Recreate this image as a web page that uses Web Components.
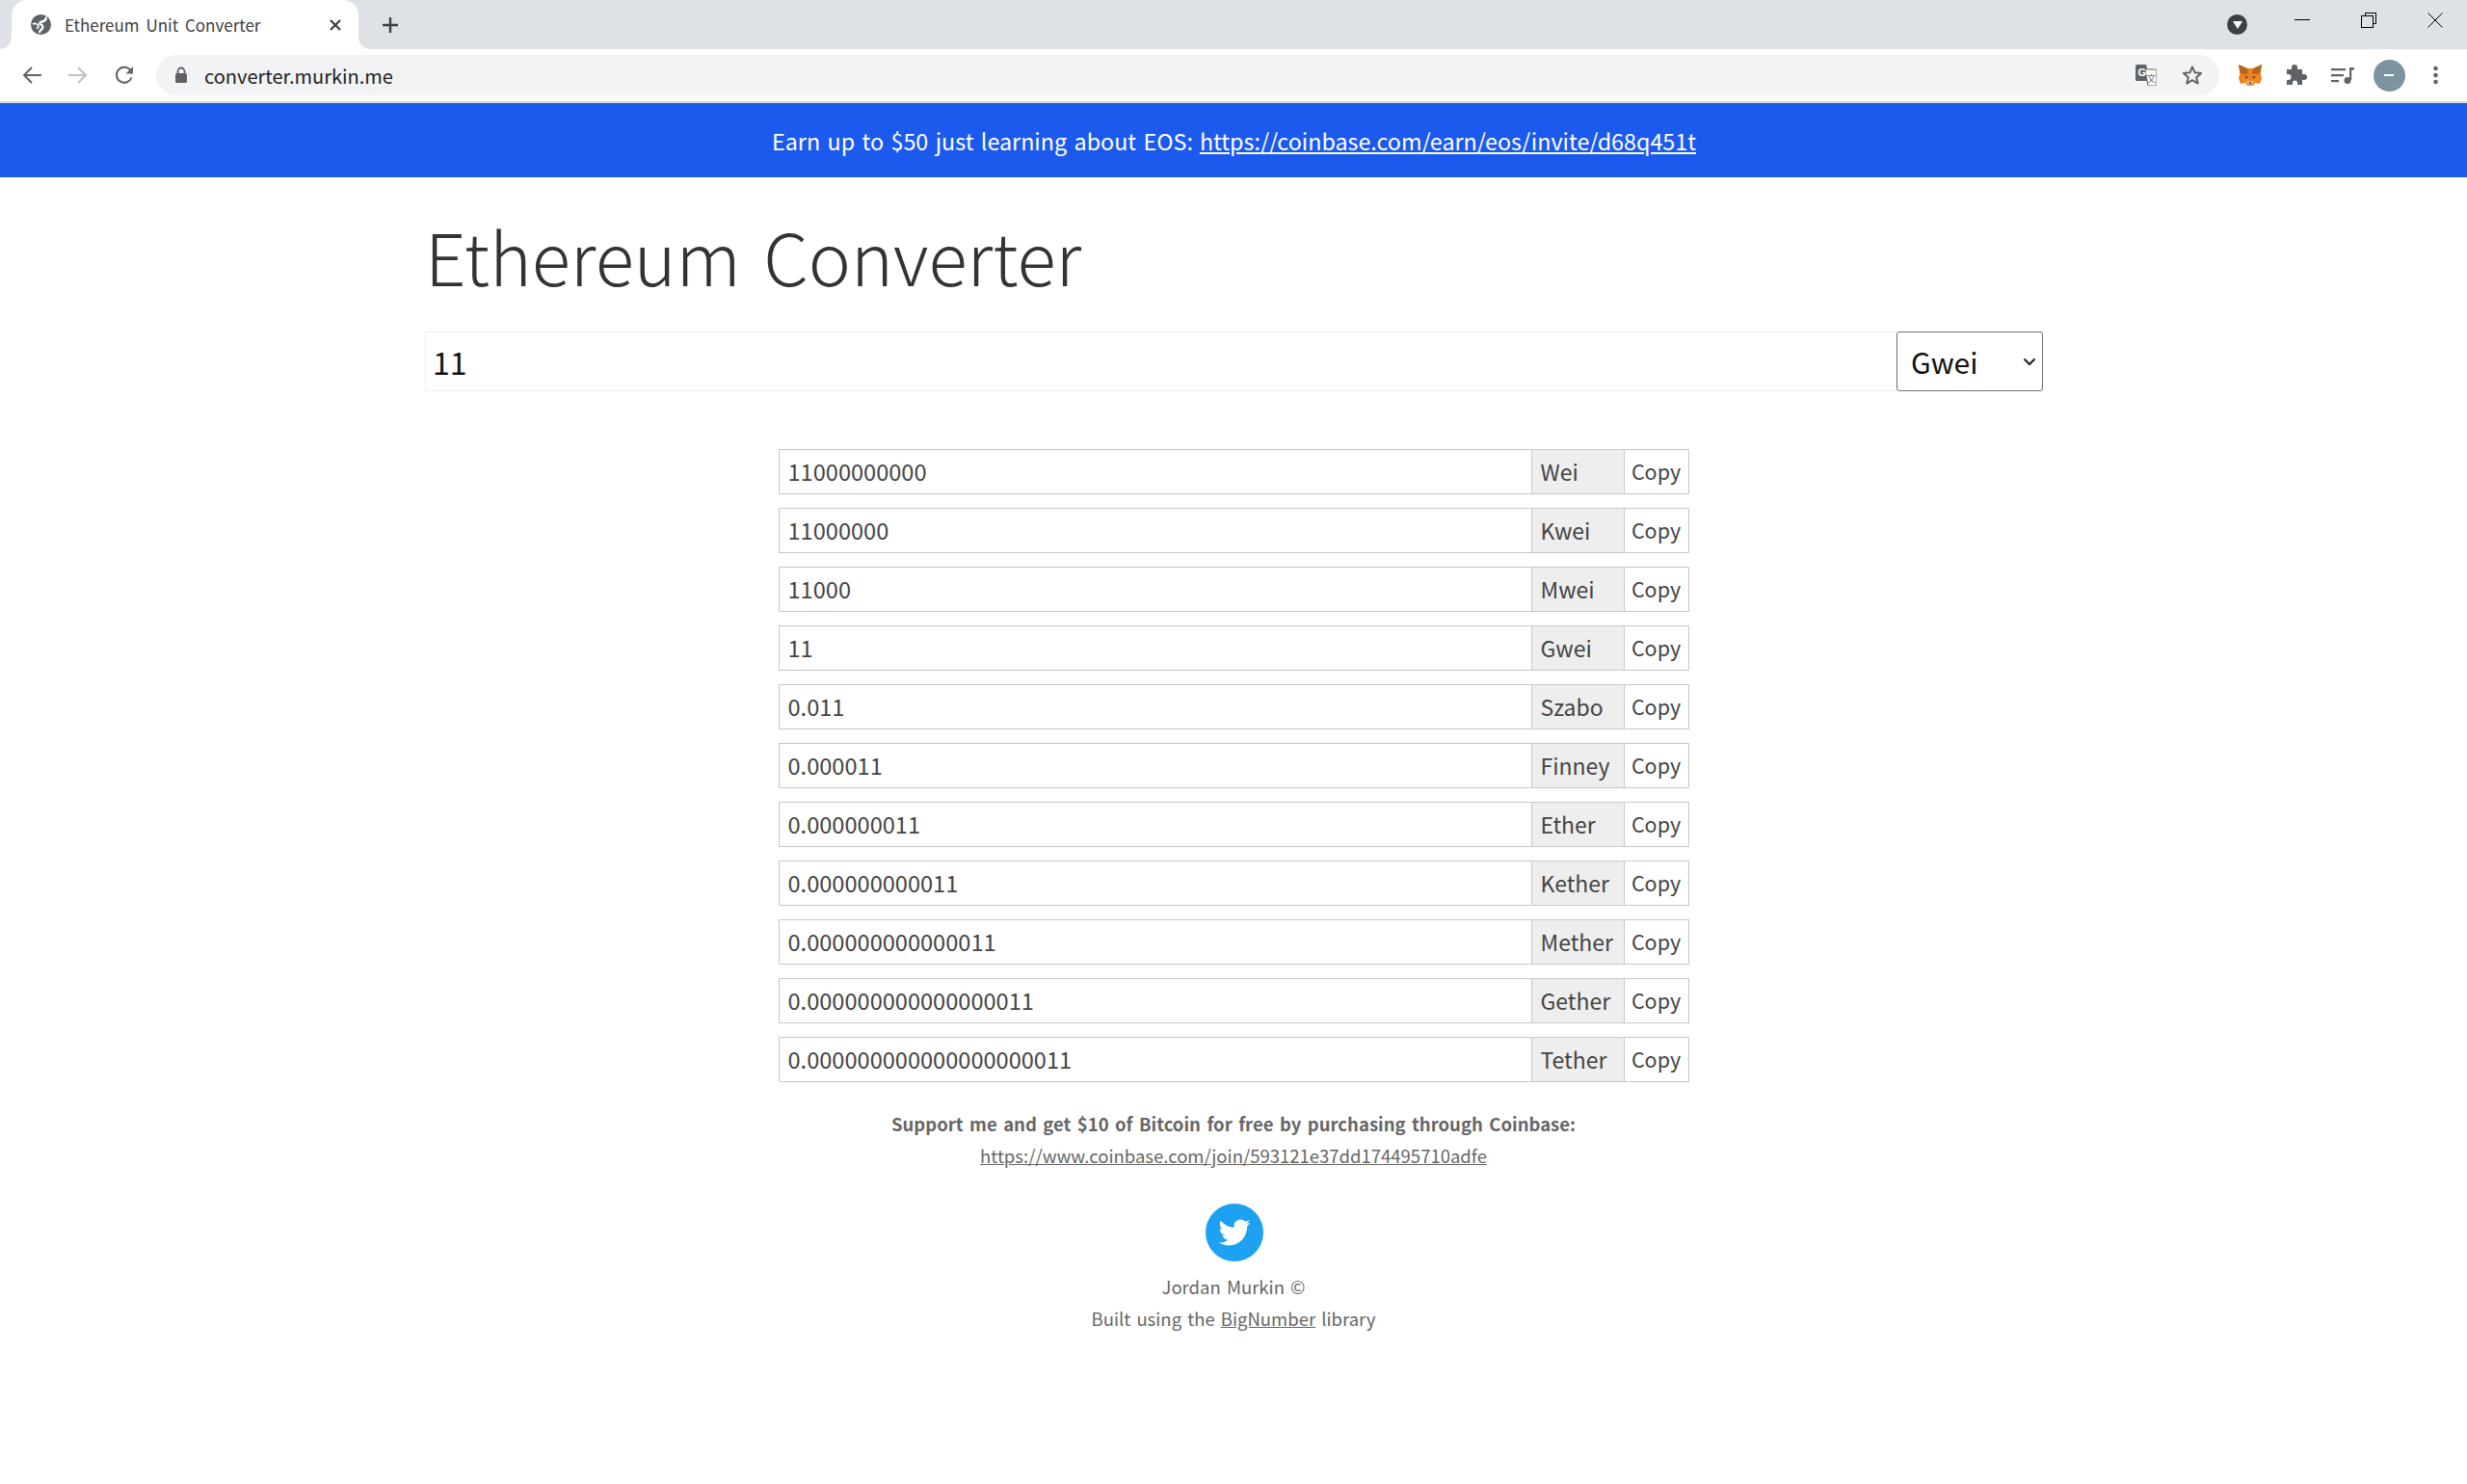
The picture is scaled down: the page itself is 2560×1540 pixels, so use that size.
<!DOCTYPE html>
<html lang="en">
<head>
<meta charset="utf-8">
<title>Ethereum Unit Converter</title>
<style>
  html, body { margin: 0; padding: 0; background: #fff; }
  body { font-family: "Noto Sans CJK KR", "Noto Sans", sans-serif; }
</style>
</head>
<body>
<browser-chrome url="converter.murkin.me" tab-title="Ethereum Unit Converter"></browser-chrome>
<promo-banner href="https://coinbase.com/earn/eos/invite/d68q451t">Earn up to $50 just learning about EOS:</promo-banner>
<converter-app>
  <unit-row unit="Wei">11000000000</unit-row>
  <unit-row unit="Kwei">11000000</unit-row>
  <unit-row unit="Mwei">11000</unit-row>
  <unit-row unit="Gwei">11</unit-row>
  <unit-row unit="Szabo">0.011</unit-row>
  <unit-row unit="Finney">0.000011</unit-row>
  <unit-row unit="Ether">0.000000011</unit-row>
  <unit-row unit="Kether">0.000000000011</unit-row>
  <unit-row unit="Mether">0.000000000000011</unit-row>
  <unit-row unit="Gether">0.000000000000000011</unit-row>
  <unit-row unit="Tether">0.000000000000000000011</unit-row>
</converter-app>
<site-footer></site-footer>

<script>
// icons for the browser toolbar
const icons = {
  globe: `<svg width="21" height="21" viewBox="0 0 21 21"><circle cx="10.500" cy="10.500" r="10.500" fill="#5f6368"/><path d="M15.500 2.500c1 3-1.500 4.500-4 5-2.500.5-3 2.200-1 3 2.500 1 2.500 3.500.5 5-1.200.9-2 2-2.200 3.500" stroke="#fff" stroke-width="2.400" fill="none"/><path d="M2 10c2-1 4.500-.5 5.500 1 .8 1.500 0 3-1.500 3.500" stroke="#fff" stroke-width="1.800" fill="none"/></svg>`,
  close: `<svg width="14" height="14" viewBox="0 0 14 14"><path d="M2 2l10 10M12 2L2 12" stroke="#3c4043" stroke-width="2.200" fill="none"/></svg>`,
  plus: `<svg width="18" height="18" viewBox="0 0 18 18"><path d="M9 1v16M1 9h16" stroke="#3c4043" stroke-width="2.400" fill="none"/></svg>`,
  back: `<svg width="22" height="20" viewBox="0 0 22 20"><path d="M21 10H3M11 2l-8 8 8 8" stroke="#5f6368" stroke-width="2" fill="none"/></svg>`,
  forward: `<svg width="22" height="20" viewBox="0 0 22 20"><path d="M1 10h18M11 2l8 8-8 8" stroke="#bdc1c6" stroke-width="2" fill="none"/></svg>`,
  reload: `<svg width="22" height="22" viewBox="0 0 22 22"><path d="M18.500 13.500A8 8 0 1 1 17 5.500" stroke="#5f6368" stroke-width="2" fill="none"/><path d="M20 2v7.500h-7.500z" fill="#5f6368"/></svg>`,
  lock: `<svg width="14" height="18" viewBox="0 0 14 18"><path d="M3.500 8V5a3.500 3.500 0 0 1 7 0v3" stroke="#5f6368" stroke-width="1.800" fill="none"/><rect x="1" y="7" width="12" height="10" rx="1.500" fill="#5f6368"/></svg>`,
  translate: `<svg width="22" height="22" viewBox="0 0 22 22"><path d="M0 1.500A1.500 1.500 0 0 1 1.500 0H11l4 17H1.500A1.500 1.500 0 0 1 0 15.500z" fill="#5f6368"/><path d="M10 5h10.500A1.500 1.500 0 0 1 22 6.500v14a1.500 1.500 0 0 1-1.500 1.500H13l-1-5z" fill="#fff" stroke="#5f6368"/><text x="2.500" y="12" font-size="11" font-weight="700" fill="#fff" font-family="Liberation Sans, sans-serif">G</text><text x="12" y="17.500" font-size="9" fill="#5f6368" font-family="Noto Sans CJK KR, sans-serif">文</text></svg>`,
  star: `<svg width="22" height="22" viewBox="0 0 22 22"><path d="M11 2.300l2.600 6 6.500.6-4.900 4.300 1.500 6.400L11 16.200l-5.700 3.400 1.500-6.400-4.900-4.300 6.500-.6z" stroke="#5f6368" stroke-width="2" stroke-linejoin="round" fill="none"/></svg>`,
  fox: `<svg width="24" height="22" viewBox="0 0 24 22"><path d="M0 0l9 4h6l9-4-1.500 9 1.500 5-2 6-5-1-2 3H9l-2-3-5 1-2-6 1.500-5z" fill="#e8821e"/><path d="M0 0l9 4 1 5-3.500 1-5-1zM24 0l-9 4-1 5 3.500 1 5-1z" fill="#b5651d"/><path d="M3 11l5 1 2 5-3 2-4-2zM21 11l-5 1-2 5 3 2 4-2z" fill="#f6851b"/><path d="M6.500 12l3 1-1.500 1.500zM17.500 12l-3 1 1.500 1.500z" fill="#33261c"/><path d="M8 17h8l-1.500 3.500h-5z" fill="#d7c1b3"/><path d="M10.500 18.500h3l-1.500 2z" fill="#23140c"/></svg>`,
  puzzle: `<svg width="24" height="22" viewBox="0 0 24 22"><path d="M2 6h5V4a3 3 0 0 1 6 0v2h5v5h2a3 3 0 0 1 0 6h-2v5h-5v-2a2.500 2.500 0 0 0-5 0v2H2v-5h1.500a3 3 0 0 0 0-6H2z" transform="translate(0 -1)" fill="#5f6368"/></svg>`,
  media: `<svg width="24" height="18" viewBox="0 0 24 18"><path d="M0 2h15v2.200H0zM0 8h13v2.200H0zM0 14h8v2.200H0z" fill="#5f6368"/><path d="M19 1h5v2.500h-2.800V14H19z" fill="#5f6368"/><circle cx="17" cy="14.500" r="3.500" fill="#5f6368"/></svg>`,
  dots: `<svg width="5" height="20" viewBox="0 0 5 20"><circle cx="2.500" cy="3" r="2.300" fill="#5f6368"/><circle cx="2.500" cy="10" r="2.300" fill="#5f6368"/><circle cx="2.500" cy="17" r="2.300" fill="#5f6368"/></svg>`,
  twitter: `<svg width="60" height="60" viewBox="0 0 60 60"><circle cx="30" cy="30" r="30" fill="#1da1f2"/><g transform="translate(13.500 13.500) scale(1.375)"><path fill="#fff" d="M23.953 4.570a10 10 0 0 1-2.825.775 4.958 4.958 0 0 0 2.163-2.723c-.951.555-2.005.959-3.127 1.184a4.920 4.920 0 0 0-8.384 4.482C7.690 8.095 4.067 6.130 1.640 3.162a4.822 4.822 0 0 0-.666 2.475c0 1.710.870 3.213 2.188 4.096a4.904 4.904 0 0 1-2.228-.616v.060a4.923 4.923 0 0 0 3.946 4.827 4.996 4.996 0 0 1-2.212.085 4.936 4.936 0 0 0 4.604 3.417 9.867 9.867 0 0 1-6.102 2.105c-.390 0-.779-.023-1.170-.067a13.995 13.995 0 0 0 7.557 2.209c9.053 0 13.998-7.496 13.998-13.985 0-.210 0-.420-.015-.630A9.935 9.935 0 0 0 24 4.590z"/></g></svg>`
};

const chromeTemplate = document.createElement("template");
chromeTemplate.innerHTML = `
<style>
  :host { display: block; font-family: "Noto Sans CJK KR", "Noto Sans", sans-serif; }
  .strip { display: flex; align-items: stretch; height: 51px; background: #dee1e6; }
  .tab {
    display: flex; align-items: center; box-sizing: border-box;
    position: relative;
    margin-left: 12px; width: 360px; padding-left: 20px;
    background: #fff; border-radius: 16px 16px 0 0;
  }
  .tab::before, .tab::after {
    content: ""; position: absolute; bottom: 0; width: 12px; height: 12px;
  }
  .tab::before { left: -12px; background: radial-gradient(circle at 0 0, transparent 11.500px, #fff 12px); }
  .tab::after { right: -12px; background: radial-gradient(circle at 100% 0, transparent 11.500px, #fff 12px); }
  .tab .name { margin-left: 14px; font-size: 17px; word-spacing: 3px; color: #3c4043; flex: 1; white-space: nowrap; }
  .tab .x { display: flex; margin-right: 17px; }
  .new { display: flex; align-items: center; justify-content: center; width: 66px; }
  .spacer { flex: 1; }
  .caption { display: flex; align-items: center; }
  .dark { width: 21px; height: 21px; border-radius: 50%; background: #3c4043; display: flex; align-items: center; justify-content: center; margin-right: 49px; }
  .dark i { width: 0; height: 0; border: 5.500px solid transparent; border-top: 8px solid #fff; border-bottom: 0; }
  .min { width: 16px; height: 1px; background: #000; margin: 0 53px 10px 0; }
  .restore { margin: 0 53px 10px 0; display: flex; }
  .shut { margin: 0 25px 10px 0; display: flex; }
  .bar { display: flex; align-items: center; height: 54px; background: #fff; padding-left: 9px; }
  .slot { display: flex; align-items: center; justify-content: center; width: 48px; flex: none; }
  .omni {
    display: flex; align-items: center; box-sizing: border-box;
    width: 2141px; height: 42px; margin: 0 8px 0 9px; padding: 0 4px 0 19px;
    background: #f1f3f4; border-radius: 21px;
  }
  .url { margin-left: 17px; font-size: 20px; color: #202124; flex: 1; }
  .avatar { width: 33px; height: 33px; border-radius: 50%; background: #7b949f; display: flex; align-items: center; justify-content: center; }
  .avatar i { width: 10px; height: 2px; background: #fff; }
  .rule { height: 2px; background: #d6d6d6; }
</style>
<div class="strip">
  <div class="tab">
    <span style="display:flex">${icons.globe}</span>
    <span class="name"></span>
    <span class="x">${icons.close}</span>
  </div>
  <div class="new">${icons.plus}</div>
  <div class="spacer"></div>
  <div class="caption">
    <div class="dark"><i></i></div>
    <div class="min"></div>
    <div class="restore"><svg width="16" height="16" viewBox="0 0 16 16"><path d="M4.500 3V.5h11v11H13" stroke="#000" fill="none"/><rect x=".5" y="3.500" width="12" height="12" stroke="#000" fill="#dee1e6"/></svg></div>
    <div class="shut"><svg width="16" height="16" viewBox="0 0 16 16"><path d="M.5.5l15 15M15.500.5l-15 15" stroke="#000" fill="none"/></svg></div>
  </div>
</div>
<div class="bar">
  <span class="slot">${icons.back}</span>
  <span class="slot">${icons.forward}</span>
  <span class="slot">${icons.reload}</span>
  <div class="omni">
    <span style="display:flex">${icons.lock}</span>
    <span class="url"></span>
    <span class="slot">${icons.translate}</span>
    <span class="slot">${icons.star}</span>
  </div>
  <span class="slot">${icons.fox}</span>
  <span class="slot">${icons.puzzle}</span>
  <span class="slot">${icons.media}</span>
  <span class="slot"><span class="avatar"><i></i></span></span>
  <span class="slot">${icons.dots}</span>
</div>
<div class="rule"></div>
`;

class BrowserChrome extends HTMLElement {
  constructor() {
    super();
    this.attachShadow({ mode: "open" });
    this.shadowRoot.appendChild(chromeTemplate.content.cloneNode(true));
  }
  connectedCallback() {
    this.shadowRoot.querySelector(".name").textContent = this.getAttribute("tab-title");
    this.shadowRoot.querySelector(".url").textContent = this.getAttribute("url");
  }
}
customElements.define("browser-chrome", BrowserChrome);

class PromoBanner extends HTMLElement {
  constructor() {
    super();
    this.attachShadow({ mode: "open" });
    this.shadowRoot.innerHTML = `
      <style>
        :host {
          display: flex; align-items: center; justify-content: center; gap: 7px;
          box-sizing: border-box; height: 77px; padding: 1px 0 0 1px; background: #1c5aed; color: #fff;
          font: 23.300px "Noto Sans CJK KR", "Noto Sans", sans-serif;
        }
        span { word-spacing: 2.200px; }
        a { color: #fff; text-decoration: underline; }
      </style>
      <span><slot></slot></span><a></a>`;
  }
  connectedCallback() {
    const a = this.shadowRoot.querySelector("a");
    a.href = this.getAttribute("href");
    a.textContent = this.getAttribute("href");
  }
}
customElements.define("promo-banner", PromoBanner);

const converterTemplate = document.createElement("template");
converterTemplate.innerHTML = `
<style>
  :host {
    display: flex; flex-direction: column; align-items: center;
    font-family: "Noto Sans CJK KR", "Noto Sans", sans-serif;
  }
  .head { width: 1679px; margin-left: 1px; }
  h1 {
    margin: 29px 0 27px 0; font-size: 74.400px; line-height: 104px;
    font-weight: 300; word-spacing: 7px; color: #333;
  }
  .amount { display: flex; height: 62px; }
  .value {
    flex: 1; box-sizing: border-box; display: flex; align-items: center;
    padding-left: 7px; font-size: 32px; color: #111;
    border: 1px solid #eee; border-right: 0;
  }
  .select {
    width: 152px; box-sizing: border-box; display: flex; align-items: center; justify-content: space-between;
    padding: 0 6px 0 14px; font-size: 30px; color: #111;
    border: 1px solid #6e6e6e; border-radius: 3px;
  }
  .list { display: flex; flex-direction: column; gap: 14px; width: 945px; margin-top: 60px; }
</style>
<div class="head">
  <h1>Ethereum Converter</h1>
  <div class="amount">
    <div class="value">11</div>
    <div class="select">Gwei<svg width="14" height="9" viewBox="0 0 14 9"><path d="M1.500 1.500L7 7l5.500-5.500" stroke="#222" stroke-width="2.200" fill="none"/></svg></div>
  </div>
</div>
<div class="list"><slot></slot></div>
`;

class ConverterApp extends HTMLElement {
  constructor() {
    super();
    this.attachShadow({ mode: "open" });
    this.shadowRoot.appendChild(converterTemplate.content.cloneNode(true));
  }
}
customElements.define("converter-app", ConverterApp);

class UnitRow extends HTMLElement {
  constructor() {
    super();
    this.attachShadow({ mode: "open" });
    this.shadowRoot.innerHTML = `
      <style>
        :host {
          display: flex; height: 47px; box-sizing: border-box;
          border: 1px solid #c8c8c8;
          font: 23.600px/1 "Noto Sans CJK KR", "Noto Sans", sans-serif; color: #444;
        }
        .value { flex: 1; display: flex; align-items: center; padding-left: 9px; }
        .unit { width: 96px; box-sizing: border-box; display: flex; align-items: center; padding-left: 9px; background: #eee; border-left: 1px solid #c8c8c8; font-size: 23px; }
        .copy { width: 67px; box-sizing: border-box; display: flex; align-items: center; justify-content: center; padding-bottom: 2px; border-left: 1px solid #c8c8c8; font-size: 21.500px; }
      </style>
      <div class="value"><slot></slot></div>
      <div class="unit"></div>
      <div class="copy">Copy</div>`;
  }
  connectedCallback() {
    this.shadowRoot.querySelector(".unit").textContent = this.getAttribute("unit");
  }
}
customElements.define("unit-row", UnitRow);

const footerTemplate = document.createElement("template");
footerTemplate.innerHTML = `
<style>
  :host {
    display: flex; flex-direction: column; align-items: center;
    margin-top: 27px; color: #666;
    font: 18.500px/33px "Noto Sans CJK KR", "Noto Sans", sans-serif;
    word-spacing: 2px;
  }
  a { color: #666; text-decoration: underline; }
  b { font-weight: 700; word-spacing: 2.300px; }
  .bird { display: flex; margin: 33px 0 10px 1px; }
</style>
<b>Support me and get $10 of Bitcoin for free by purchasing through Coinbase:</b>
<a href="https://www.coinbase.com/join/593121e37dd174495710adfe">https://www.coinbase.com/join/593121e37dd174495710adfe</a>
<div class="bird">${icons.twitter}</div>
<div>Jordan Murkin ©</div>
<div>Built using the <a href="#">BigNumber</a> library</div>
`;

class SiteFooter extends HTMLElement {
  constructor() {
    super();
    this.attachShadow({ mode: "open" });
    this.shadowRoot.appendChild(footerTemplate.content.cloneNode(true));
  }
}
customElements.define("site-footer", SiteFooter);
</script>
</body>
</html>
